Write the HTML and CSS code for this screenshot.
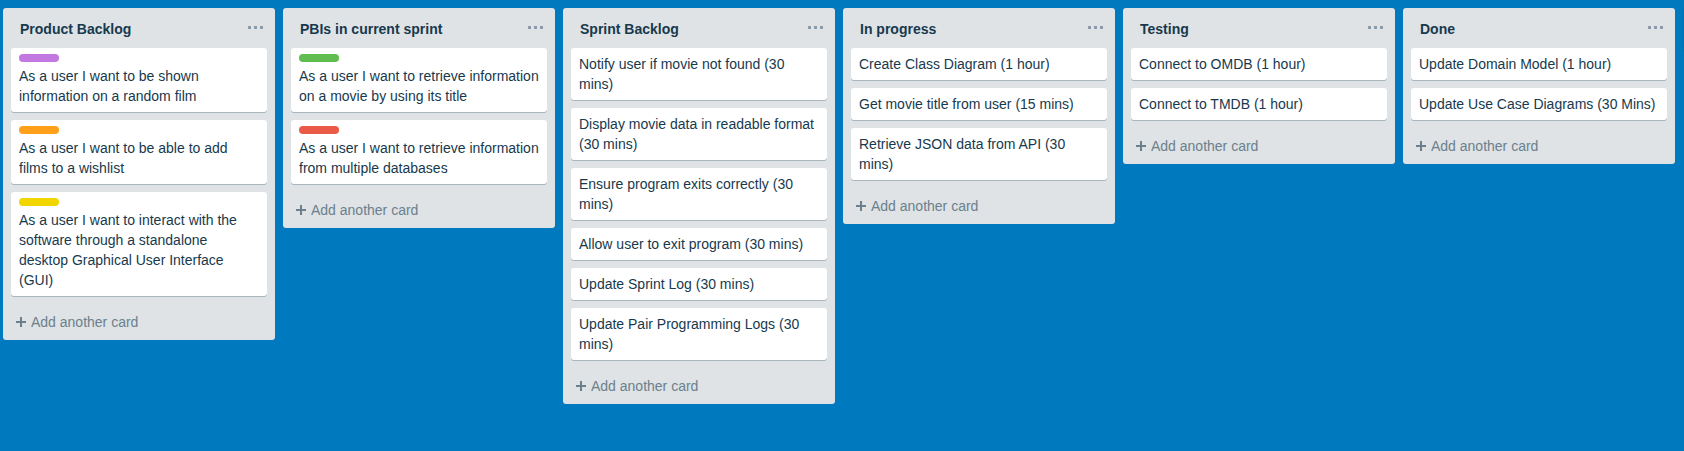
FILE: index.html
```html
<!DOCTYPE html>
<html>
<head>
<meta charset="utf-8">
<link rel="stylesheet" href="styles.css">
</head>
<body>
<div class="board">
  <div class="list">
    <div class="list-header"><span class="title">Product Backlog</span><span class="dots"><i></i><i></i><i></i></span></div>
    <div class="cards">
      <div class="card"><span class="label purple"></span><p>As a user I want to be shown information on a random film</p></div>
      <div class="card"><span class="label orange"></span><p>As a user I want to be able to add films to a wishlist</p></div>
      <div class="card"><span class="label yellow"></span><p>As a user I want to interact with the software through a standalone desktop Graphical User Interface (GUI)</p></div>
    </div>
    <div class="composer"><span class="plus"></span>Add another card</div>
  </div>
  <div class="list">
    <div class="list-header"><span class="title">PBIs in current sprint</span><span class="dots"><i></i><i></i><i></i></span></div>
    <div class="cards">
      <div class="card"><span class="label green"></span><p>As a user I want to retrieve information on a movie by using its title</p></div>
      <div class="card"><span class="label red"></span><p>As a user I want to retrieve information from multiple databases</p></div>
    </div>
    <div class="composer"><span class="plus"></span>Add another card</div>
  </div>
  <div class="list">
    <div class="list-header"><span class="title">Sprint Backlog</span><span class="dots"><i></i><i></i><i></i></span></div>
    <div class="cards">
      <div class="card"><p>Notify user if movie not found (30 mins)</p></div>
      <div class="card"><p>Display movie data in readable format (30 mins)</p></div>
      <div class="card"><p>Ensure program exits correctly (30 mins)</p></div>
      <div class="card"><p>Allow user to exit program (30 mins)</p></div>
      <div class="card"><p>Update Sprint Log (30 mins)</p></div>
      <div class="card"><p>Update Pair Programming Logs (30 mins)</p></div>
    </div>
    <div class="composer"><span class="plus"></span>Add another card</div>
  </div>
  <div class="list">
    <div class="list-header"><span class="title">In progress</span><span class="dots"><i></i><i></i><i></i></span></div>
    <div class="cards">
      <div class="card"><p>Create Class Diagram (1 hour)</p></div>
      <div class="card"><p>Get movie title from user (15 mins)</p></div>
      <div class="card"><p>Retrieve JSON data from API (30 mins)</p></div>
    </div>
    <div class="composer"><span class="plus"></span>Add another card</div>
  </div>
  <div class="list">
    <div class="list-header"><span class="title">Testing</span><span class="dots"><i></i><i></i><i></i></span></div>
    <div class="cards">
      <div class="card"><p>Connect to OMDB (1 hour)</p></div>
      <div class="card"><p>Connect to TMDB (1 hour)</p></div>
    </div>
    <div class="composer"><span class="plus"></span>Add another card</div>
  </div>
  <div class="list">
    <div class="list-header"><span class="title">Done</span><span class="dots"><i></i><i></i><i></i></span></div>
    <div class="cards">
      <div class="card"><p>Update Domain Model (1 hour)</p></div>
      <div class="card"><p>Update Use Case Diagrams (30 Mins)</p></div>
    </div>
    <div class="composer"><span class="plus"></span>Add another card</div>
  </div>
  <div class="add-list"></div>
</div>
</body>
</html>
```

FILE: styles.css
```css
html, body {
  margin: 0;
  padding: 0;
  height: 100%;
  background: #0079bf;
  overflow: hidden;
}
body {
  font-family: "Liberation Sans", Arial, sans-serif;
  font-size: 14px;
  color: #17394d;
}
.board {
  display: flex;
  align-items: flex-start;
  gap: 8px;
  padding: 8px 0 0 3px;
  overflow: hidden;
}
.list {
  flex: 0 0 272px;
  width: 272px;
  background: #dfe3e6;
  border-radius: 3px;
}
.list-header {
  height: 40px;
  box-sizing: border-box;
  display: flex;
  justify-content: space-between;
  padding: 11px 12px 0 17px;
}
.title {
  font-weight: bold;
  line-height: 20px;
  color: #17394d;
}
.dots {
  display: flex;
  gap: 3px;
  margin-top: 7px;
  height: 3px;
}
.dots i {
  display: block;
  width: 3px;
  height: 3px;
  background: #8c9ba7;
}
.cards {
  padding: 0 8px;
}
.card {
  background: #fff;
  border-radius: 3px;
  box-shadow: 0 1px 0 rgba(9, 45, 66, 0.25);
  margin-bottom: 8px;
  padding: 6px 8px 2px;
}
.card p {
  margin: 0 0 4px;
  line-height: 20px;
}
.label {
  display: block;
  width: 40px;
  height: 8px;
  border-radius: 4px;
  margin-bottom: 4px;
}
.purple { background: #c377e0; }
.orange { background: #ff9f1a; }
.yellow { background: #f2d600; }
.green { background: #61bd4f; }
.red { background: #eb5a46; }
.composer {
  display: flex;
  align-items: center;
  padding: 8px 13px;
  line-height: 20px;
  color: #6b808c;
}
.plus {
  position: relative;
  width: 10px;
  height: 10px;
  margin-right: 5px;
}
.plus::before, .plus::after {
  content: "";
  position: absolute;
  background: #6b808c;
}
.plus::before { left: 0; top: 4px; width: 10px; height: 2px; }
.plus::after { left: 4px; top: 0; width: 2px; height: 10px; }
.add-list {
  flex: 1 1 auto;
  min-width: 0;
  height: 44px;
  border-radius: 3px 0 0 3px;
  background: rgba(0, 0, 0, 0.05);
}
```
